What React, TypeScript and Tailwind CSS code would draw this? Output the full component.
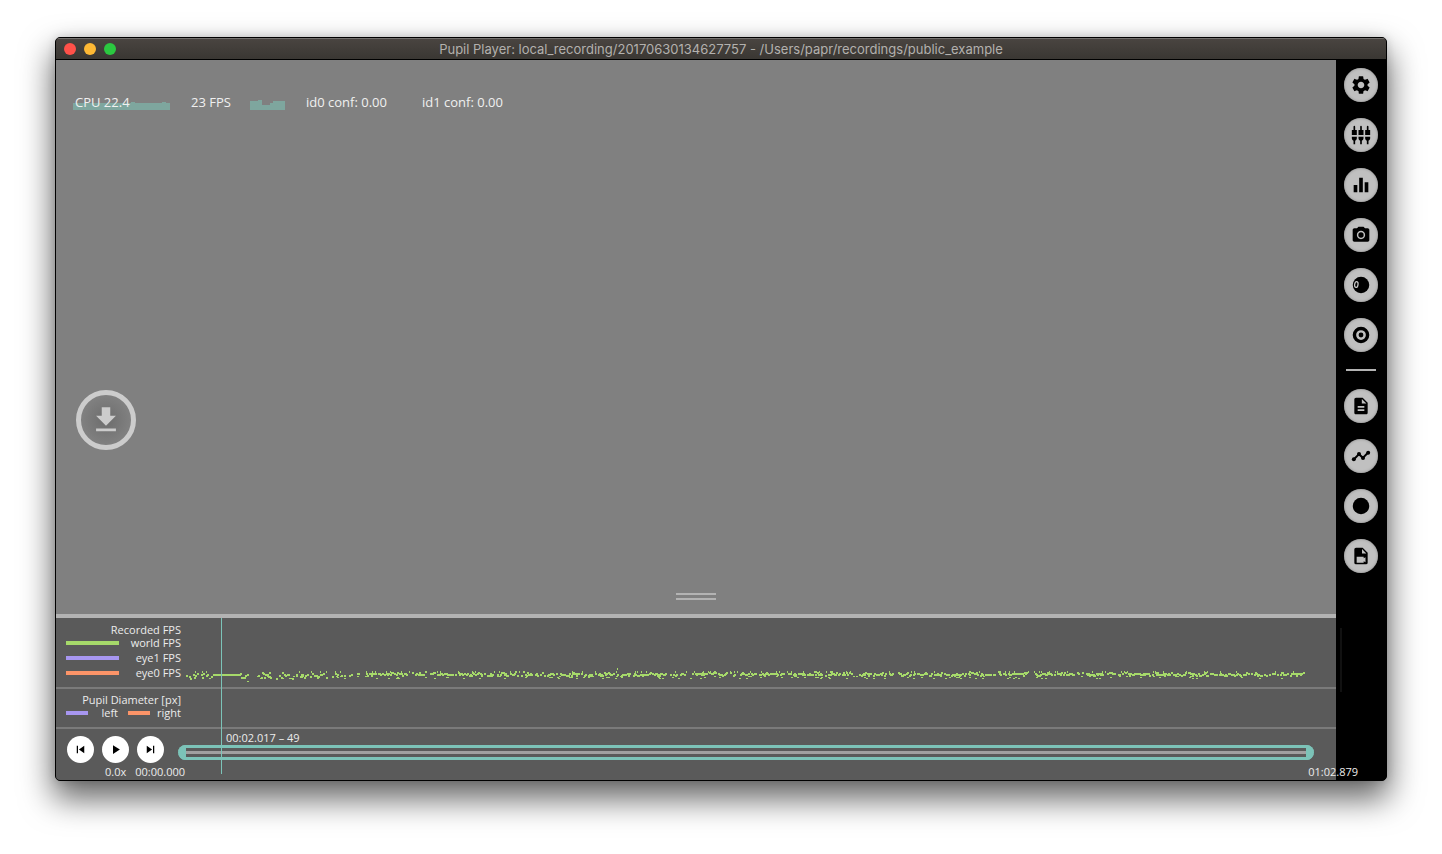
import type { ReactNode } from "react";
import {
  MdDescription,
  MdEqualizer,
  MdPhotoCamera,
  MdPlayArrow,
  MdSettings,
  MdSettingsInputComponent,
  MdSkipNext,
  MdSkipPrevious,
} from "react-icons/md";

type Plugin = {
  label: string;
  icon: ReactNode;
};

function EyeIcon() {
  return (
    <svg viewBox="0 0 24 24" className="size-5">
      <circle cx="12" cy="12" r="9.9" />
      <ellipse
        cx="6.4"
        cy="11.4"
        rx="2"
        ry="3.6"
        fill="none"
        stroke="#c8c8c8"
        strokeWidth="1.5"
        transform="rotate(10 6.4 11.4)"
      />
    </svg>
  );
}

function TargetIcon() {
  return (
    <svg viewBox="0 0 24 24" className="size-5">
      <circle cx="12" cy="12" r="7.9" fill="none" stroke="black" strokeWidth="4.1" />
      <circle cx="12" cy="12" r="2.9" />
    </svg>
  );
}

function PolylineIcon() {
  return (
    <svg viewBox="0 0 24 24" className="size-5">
      <path d="M3.2 16.2 9.6 9.8l4.6 4.4 6.4-6.4" fill="none" stroke="black" strokeWidth="2.4" />
      <circle cx="3.4" cy="16" r="2.4" />
      <circle cx="9.6" cy="9.6" r="2.4" />
      <circle cx="14.4" cy="14.4" r="2.4" />
      <circle cx="20.6" cy="8" r="2.4" />
    </svg>
  );
}

function DotIcon() {
  return (
    <svg viewBox="0 0 24 24" className="size-5">
      <circle cx="12" cy="12" r="9.9" />
    </svg>
  );
}

function VideoFileIcon() {
  return (
    <svg viewBox="0 0 24 24" className="size-5">
      <path
        fillRule="evenodd"
        d="M6 2a2 2 0 0 0-2 2v16a2 2 0 0 0 2 2h12a2 2 0 0 0 2-2V8l-6-6H6zm7.2 1.6L18.4 9h-5.2V3.6zM6.8 13h8.4v1.8l2.2-1.3v6l-2.2-1.3V20H6.8v-7z"
      />
    </svg>
  );
}

const SYSTEM_PLUGINS: Plugin[] = [
  { label: "General Settings", icon: <MdSettings className="size-[22px]" /> },
  { label: "Plugin Manager", icon: <MdSettingsInputComponent className="size-5" /> },
  { label: "System Graphs", icon: <MdEqualizer className="size-[22px]" /> },
  { label: "Video Source", icon: <MdPhotoCamera className="size-5" /> },
  { label: "Pupil Data", icon: <EyeIcon /> },
  { label: "Gaze Data", icon: <TargetIcon /> },
];

const USER_PLUGINS: Plugin[] = [
  { label: "Raw Data Exporter", icon: <MdDescription className="size-5" /> },
  { label: "Vis Polyline", icon: <PolylineIcon /> },
  { label: "Vis Circle", icon: <DotIcon /> },
  { label: "World Video Exporter", icon: <VideoFileIcon /> },
];

const SERIES = [
  { label: "world FPS", color: "bg-[#a6d96a]" },
  { label: "eye1 FPS", color: "bg-[#a796f0]" },
  { label: "eye0 FPS", color: "bg-[#fc9468]" },
];

function buildFpsPath() {
  let seed = 7;
  const next = () => {
    seed = (seed * 16807) % 2147483647;
    return seed / 2147483647;
  };
  let d = "M27 56h28v2h-28z";
  for (let x = 0; x < 1119; x++) {
    const paused = x > 25 && x < 53;
    const dropped = x > 61 && x < 69;
    if (paused || dropped) continue;
    // frame rate is less steady while the recording starts
    const starting = x < 180;
    const y = 54 + Math.floor(((next() + next()) / 2) * (starting ? 7 : 4));
    if (next() < (starting ? 0.45 : 0.6)) d += `M${x} ${y}h2v2h-2z`;
    if (next() < 0.12) d += `M${x} ${58 + Math.floor(next() * 3)}h2v1h-2z`;
    if (next() < 0.08) d += `M${x} 53h1v2h-1z`;
  }
  return d + "M431 50h1v2h-1zM61 63h2v1h-2z";
}

const FPS_PATH = buildFpsPath();

function PluginButton({ label, icon }: Plugin) {
  return (
    <button
      aria-label={label}
      className="flex size-[34px] shrink-0 items-center justify-center rounded-full bg-[#c0c0c0] text-black shadow-[inset_0_0_3px_#888]"
    >
      {icon}
    </button>
  );
}

function Sidebar() {
  return (
    <aside className="flex w-[50px] shrink-0 flex-col items-center bg-black pt-2">
      <div className="flex flex-col gap-4">
        {SYSTEM_PLUGINS.map((p) => (
          <PluginButton key={p.label} {...p} />
        ))}
      </div>
      <hr className="mt-[17px] mb-[18px] h-0.5 w-[30px] border-0 bg-[#b3b3b3]" />
      <div className="flex flex-col gap-4">
        {USER_PLUGINS.map((p) => (
          <PluginButton key={p.label} {...p} />
        ))}
      </div>
      <div className="mt-[55px] mr-10 h-16 w-0.5 bg-[#111]" />
    </aside>
  );
}

function TitleBar() {
  return (
    <header className="relative flex h-[22px] shrink-0 items-center justify-center border-b border-black bg-gradient-to-b from-[#4a4541] to-[#3a3733] shadow-[inset_0_1px_0_#74716e]">
      <div className="absolute left-2 flex gap-2">
        <button aria-label="Close" className="size-3 rounded-full bg-[#ff5149]" />
        <button aria-label="Minimize" className="size-3 rounded-full bg-[#fdb834]" />
        <button aria-label="Zoom" className="size-3 rounded-full bg-[#2bc840]" />
      </div>
      <h1 className="font-[Inter,sans-serif] text-[13px] leading-5 whitespace-nowrap text-[#b3b1ae]">
        Pupil Player: local_recording/20170630134627757 - /Users/papr/recordings/public_example
      </h1>
    </header>
  );
}

function WorldView() {
  return (
    <main className="flex min-h-0 flex-1 flex-col justify-between bg-[#808080] px-5">
      <div className="flex h-[50px] items-end text-[13px] leading-4 whitespace-nowrap text-[#f0f0f0]">
        <div className="relative -ml-[3px] w-[118px] pl-0.5">
          <svg viewBox="0 0 97 8" className="absolute bottom-0 left-0 h-2 w-[97px] fill-[#7ea69e]">
            <path d="M0 1h58V0h4v1h27V0h4v1h4v7H0z" />
          </svg>
          <span className="relative">CPU 22.4</span>
        </div>
        <span className="w-[59px]">23 FPS</span>
        <svg viewBox="0 0 35 10" className="mr-[21px] h-2.5 w-[35px] fill-[#7ea69e]">
          <path d="M0 1h8V0h4v5h8V3h3V1h12v9H0z" />
        </svg>
        <span className="w-[116px]">id0 conf: 0.00</span>
        <span>id1 conf: 0.00</span>
      </div>
      <button
        aria-label="Export"
        className="mt-auto mb-[143px] flex size-[60px] items-center justify-center rounded-full border-[5px] border-[#cccccc] bg-[radial-gradient(#6c6c6c,#808080_68%)]"
      >
        <svg viewBox="0 0 24 24" className="size-[34px] fill-[#cccccc]">
          <path d="M19 9h-4V3H9v6H5l7 7 7-7zM5 18v2h14v-2H5z" />
        </svg>
      </button>
      <div className="mb-3.5 h-[7px] w-10 self-center border-y-2 border-[#b3b3b3]" />
    </main>
  );
}

function Timelines() {
  return (
    <section className="relative shrink-0 border-t-4 border-[#b3b3b3] bg-[#5a5a5a] text-[11px] text-[#ececec]">
      <div className="flex h-[71px] border-b-2 border-[#7a7a7a]">
        <div className="w-[125px] shrink-0 pt-1 pl-2.5 text-right leading-[15px]">
          <p className="-mb-[3px] leading-4">Recorded FPS</p>
          {SERIES.map((s) => (
            <div key={s.label} className="flex items-center justify-between">
              <span className={`h-1 w-[53px] ${s.color}`} />
              {s.label}
            </div>
          ))}
        </div>
        <svg
          viewBox="0 0 1120 69"
          preserveAspectRatio="none"
          shapeRendering="crispEdges"
          className="mr-[30px] ml-[5px] h-[69px] min-w-0 flex-1 fill-[#a6d96a]"
        >
          <path d={FPS_PATH} />
        </svg>
      </div>
      <div className="h-10 border-b-2 border-[#7a7a7a]">
        <div className="w-[125px] pt-[3px] pl-2.5 text-right leading-[15px]">
          <p className="-mb-0.5">Pupil Diameter [px]</p>
          <div className="flex items-center">
            <span className="h-1 w-[22px] bg-[#a796f0]" />
            <span className="w-[30px]">left</span>
            <span className="ml-2.5 h-1 w-[22px] bg-[#fc9468]" />
            <span className="flex-1">right</span>
          </div>
        </div>
      </div>
      <div className="flex h-[51px] items-start">
        <div className="w-[122px] shrink-0 pt-[7px] pl-[11px]">
          <div className="flex gap-2">
            <TransportButton label="Previous frame">
              <MdSkipPrevious className="size-[15px]" />
            </TransportButton>
            <TransportButton label="Play">
              <MdPlayArrow className="size-[15px]" />
            </TransportButton>
            <TransportButton label="Next frame">
              <MdSkipNext className="size-[15px]" />
            </TransportButton>
          </div>
          <div className="-mt-px flex gap-[9px] pl-[38px] leading-5 whitespace-nowrap">
            <span>0.0x</span>
            <span>00:00.000</span>
          </div>
        </div>
        <div className="mr-[22px] flex-1">
          <p className="-mb-0.5 pl-12 leading-[18px]">00:02.017 – 49</p>
          <div className="flex h-[15px] items-center rounded-full border-y-[3px] border-[#7cc3b8]">
            <span className="-my-[3px] h-[15px] w-2 rounded-l-full bg-[#7cc3b8]" />
            <span className="h-[3px] flex-1 bg-[#a0a0a0]" />
            <span className="-my-[3px] h-[15px] w-2 rounded-r-full bg-[#7cc3b8]" />
          </div>
        </div>
      </div>
      <div className="absolute top-0 bottom-1.5 left-[165px] w-px bg-[#7cc3b8]" />
      <span className="absolute right-[-22px] bottom-0 leading-4">01:02.879</span>
    </section>
  );
}

function TransportButton({ label, children }: { label: string; children: ReactNode }) {
  return (
    <button
      aria-label={label}
      className="flex size-[27px] items-center justify-center rounded-full bg-white text-black"
    >
      {children}
    </button>
  );
}

export default function App() {
  return (
    <div className="flex h-screen flex-col bg-white px-[55px] pt-[37px] pb-[73px] font-['Open_Sans',sans-serif]">
      <div className="flex min-h-0 flex-1 flex-col overflow-hidden rounded-[5px] border border-black bg-black shadow-[0_16px_32px_2px_rgba(0,0,0,0.6),0_0_10px_rgba(0,0,0,0.15)]">
        <TitleBar />
        <div className="flex min-h-0 flex-1">
          <div className="relative z-10 flex min-w-0 flex-1 flex-col">
            <WorldView />
            <Timelines />
          </div>
          <Sidebar />
        </div>
      </div>
    </div>
  );
}
